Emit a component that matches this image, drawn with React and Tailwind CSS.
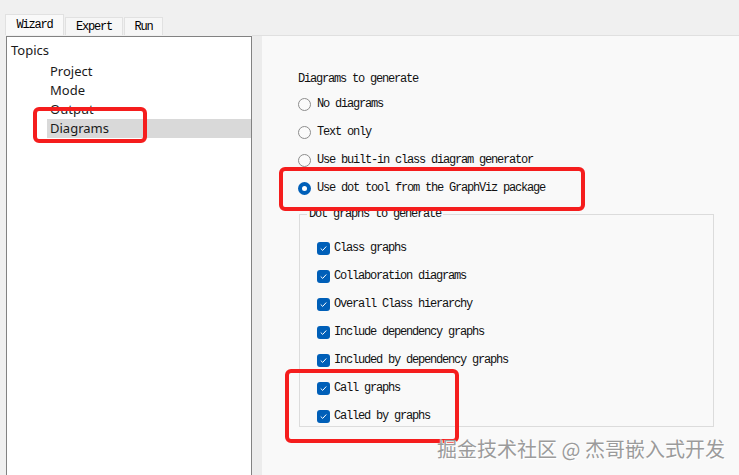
import React from "react";

const mono = { fontFamily: '"Liberation Mono", "DejaVu Sans Mono", monospace' };

const topics = ["Project", "Mode", "Output", "Diagrams"];

const radios = [
  { label: "No diagrams", checked: false },
  { label: "Text only", checked: false },
  { label: "Use built-in class diagram generator", checked: false },
  { label: "Use dot tool from the GraphViz package", checked: true },
];

const dotGraphs = [
  "Class graphs",
  "Collaboration diagrams",
  "Overall Class hierarchy",
  "Include dependency graphs",
  "Included by dependency graphs",
  "Call graphs",
  "Called by graphs",
];

const Radio = ({ checked }) =>
  checked ? (
    <span className="w-[13px] h-[13px] rounded-full bg-[#005fb8] flex items-center justify-center shrink-0">
      <span className="w-[5px] h-[5px] rounded-full bg-white"></span>
    </span>
  ) : (
    <span className="w-[13px] h-[13px] rounded-full border border-[#8d8d8d] bg-[#fbfbfb] shrink-0"></span>
  );

const Checkbox = () => (
  <span className="w-[13px] h-[13px] rounded-[3px] bg-[#005fb8] flex items-center justify-center shrink-0">
    <svg width="9" height="9" viewBox="0 0 9 9" fill="none">
      <path d="M2 4.8 L3.7 6.4 L7 2.8" stroke="white" strokeWidth="1" strokeLinecap="round" strokeLinejoin="round" />
    </svg>
  </span>
);

const Tab = ({ label, active }) => (
  <div
    className={
      "flex items-center justify-center border border-b-0 border-[#e1e1e1] text-[12px] tracking-[-1.2px] text-black " +
      (active ? "h-[21px] bg-[#f9f9f9]" : "h-[18px] bg-[#f6f6f6]")
    }
    style={mono}
  >
    {label}
  </div>
);

const RedBox = ({ className }) => (
  <div className={"absolute border-[4px] border-[#f51d1d] rounded-[6px] pointer-events-none " + className}></div>
);

export default function App() {
  return (
    <div className="relative w-[739px] h-[475px] overflow-hidden bg-[#f0f0f0] flex flex-col">
      {/* tab strip */}
      <div className="h-[35px] flex items-end pl-[5px] gap-[1px] shrink-0">
        <div className="w-[59px]"><Tab label="Wizard" active /></div>
        <div className="w-[58px]"><Tab label="Expert" /></div>
        <div className="w-[39px]"><Tab label="Run" /></div>
      </div>

      <div className="flex flex-1 min-h-0">
        {/* topics tree */}
        <div className="ml-[6px] mt-[1px] w-[246px] bg-white border border-b-0 border-[#828282] pt-[4px]">
          <div
            className="h-[19px] pl-[4px] flex items-center text-[13px] text-[#1a1a1a]"
            style={{ fontFamily: '"Noto Sans", "Open Sans", sans-serif' }}
          >
            Topics
          </div>
          <div className="mt-[2px] flex flex-col">
            {topics.map((t) => (
              <div
                key={t}
                className={
                  "ml-[40px] h-[19px] pl-[3px] flex items-center text-[13px] text-[#1a1a1a] " +
                  (t === "Diagrams" ? "bg-[#d9d9d9]" : "")
                }
                style={{ fontFamily: '"Noto Sans", "Open Sans", sans-serif' }}
              >
                {t}
              </div>
            ))}
          </div>
        </div>

        <div className="w-[10px] bg-[#ececec] border-t border-[#e0e0e0]"></div>

        {/* diagrams page */}
        <div className="flex-1 bg-[#f9f9f9] border-t border-[#e0e0e0] pl-[36px] pt-[36px] text-[12px] tracking-[-1.2px] text-[#111]" style={mono}>
          <div className="h-[14px] flex items-center">Diagrams to generate</div>
          <div className="mt-[4px] flex flex-col">
            {radios.map((r) => (
              <div key={r.label} className="h-[28px] flex items-center gap-[6px]">
                <Radio checked={r.checked} />
                <span>{r.label}</span>
              </div>
            ))}
          </div>

          <fieldset className="ml-[1px] mt-[5px] w-[415px] h-[220px] border border-[#dcdcdc] px-[17px]">
            <legend className="ml-[-10px] px-[2px] h-[14px] leading-[14px]">Dot graphs to generate</legend>
            <div className="mt-[13px] flex flex-col">
              {dotGraphs.map((g) => (
                <div key={g} className="h-[28px] flex items-center gap-[4px]">
                  <Checkbox />
                  <span>{g}</span>
                </div>
              ))}
            </div>
          </fieldset>
        </div>
      </div>

      {/* annotations */}
      <RedBox className="left-[33px] top-[107px] w-[114px] h-[36px]" />
      <RedBox className="left-[279px] top-[167px] w-[306px] h-[44px]" />
      <RedBox className="left-[285px] top-[369px] w-[174px] h-[74px]" />

      <div
        className="absolute left-[437px] top-[436px] text-[20px] leading-[26px] text-[#9b9b9b] whitespace-nowrap pointer-events-none"
        style={{
          fontFamily: '"Noto Sans CJK SC", "Noto Sans", sans-serif',
          textShadow: "0 0 1px #ffffff, 1px 1px 0 #ffffff",
        }}
      >
        掘金技术社区 @ 杰哥嵌入式开发
      </div>
    </div>
  );
}
